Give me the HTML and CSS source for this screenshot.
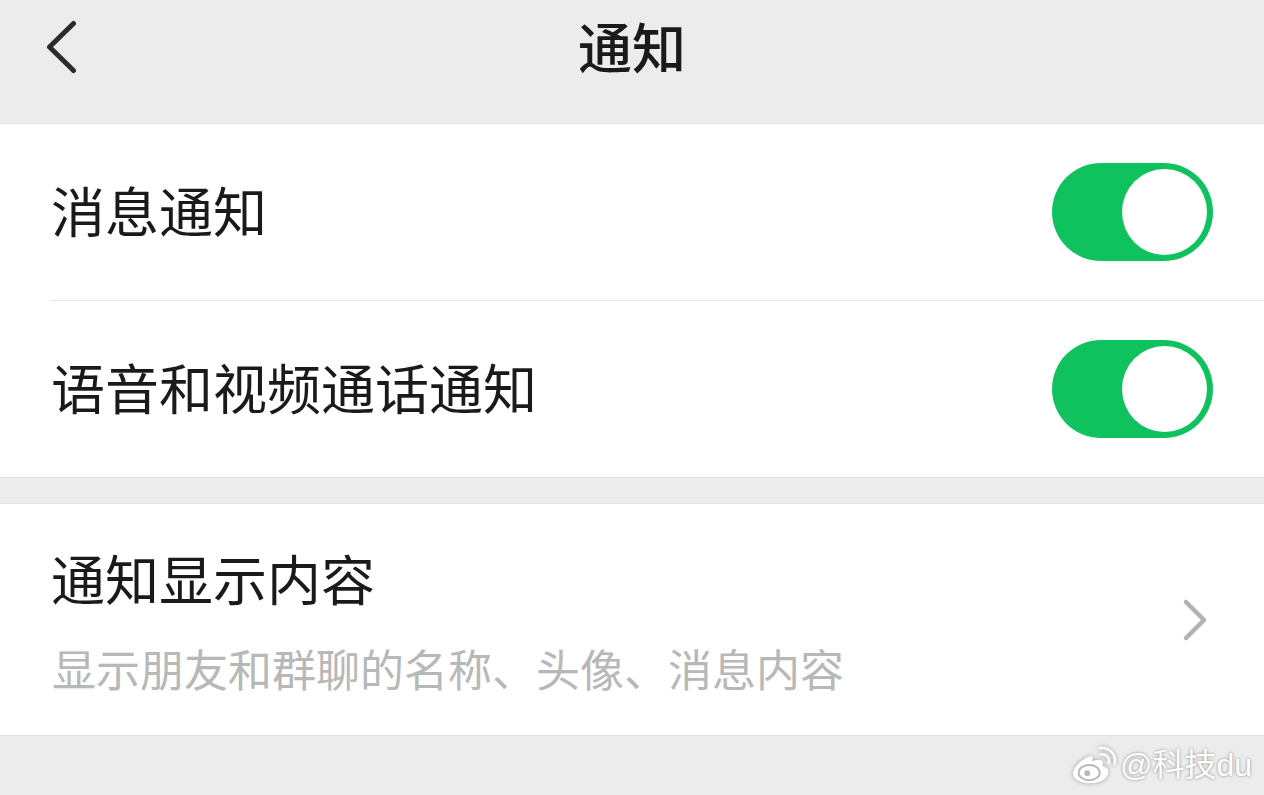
FILE: index.html
```html
<!DOCTYPE html>
<html lang="zh-CN">
<head>
    <meta charset="UTF-8">
    <meta name="viewport" content="width=device-width, initial-scale=1.0">
    <title>通知</title>
    <link rel="stylesheet" href="styles.css">
</head>
<body>
    <header class="top-bar">
        <svg class="back-icon" width="32" height="56" viewBox="0 0 32 56">
            <path d="M27.500 3.500 L3.500 27 L27.500 50.500" fill="none" stroke="#2b2b2b" stroke-width="5" stroke-linecap="round" stroke-linejoin="round"/>
        </svg>
        <h1 class="title">通知</h1>
    </header>

    <section class="group">
        <div class="row row-switch row-first">
            <span class="label">消息通知</span>
            <span class="switch"><span class="knob"></span></span>
        </div>
        <div class="row row-switch row-second">
            <span class="label">语音和视频通话通知</span>
            <span class="switch"><span class="knob"></span></span>
        </div>
    </section>

    <section class="group group-last">
        <div class="row row-link">
            <div class="link-text">
                <span class="label">通知显示内容</span>
                <span class="hint">显示朋友和群聊的名称、头像、消息内容</span>
            </div>
            <svg class="chevron" width="26" height="44" viewBox="0 0 26 44">
                <path d="M4 4 L22 22 L4 40" fill="none" stroke="#b2b2b2" stroke-width="4.500" stroke-linecap="round" stroke-linejoin="round"/>
            </svg>
        </div>
    </section>

    <div class="watermark">
        <svg class="weibo-icon" width="46" height="40" viewBox="0 0 48 40">
            <path d="M20 11 C11 14 2 22 2 29 C2 35 11 39 21 39 C32 39 39 33 39 27 C39 23 35 22 33 21 C34 17 33 15 30 14.500 C27 14 24 15.500 22 16 C23 12 23 10 20 11 Z" fill="#fff"/>
            <ellipse cx="19" cy="28" rx="11" ry="8" fill="none" stroke="#b9b9b9" stroke-width="2"/>
            <circle cx="17" cy="28.500" r="3" fill="#b9b9b9"/>
            <path d="M31 9 C36 8 41 12 39.500 18" fill="none" stroke="#fff" stroke-width="2.500" stroke-linecap="round"/>
            <path d="M30 2.500 C39 0.500 48 9 45.500 19" fill="none" stroke="#fff" stroke-width="2.500" stroke-linecap="round"/>
        </svg>
        <span>@科技du</span>
    </div>
</body>
</html>
```

FILE: styles.css
```css
html, body { margin: 0; padding: 0; }
body { height: 795px; overflow: hidden; position: relative; background-color: #ececec; font-family: "Noto Sans CJK SC", "Liberation Sans", sans-serif; color: #1a1a1a; }

.top-bar { height: 123px; display: flex; justify-content: center; position: relative; }
.back-icon { position: absolute; left: 46px; top: 20px; }
.title { margin: 0; font-size: 54px; line-height: 92px; font-weight: 500; }

.group { background-color: #fff; border-top: 1px solid #e2e2e2; border-bottom: 1px solid #e2e2e2; margin-bottom: 25px; }
.group-last { margin-bottom: 0; }

.row { display: flex; align-items: center; justify-content: space-between; padding: 0 51px 0 51px; }
.row-first { height: 177px; padding-bottom: 1px; box-sizing: border-box; }
.row-second { height: 176px; position: relative; }
.row-second::before { content: ""; position: absolute; left: 51px; right: 0; top: -1px; height: 1px; background-color: #e6e6e6; }
.row-link { height: 231px; padding-right: 56px; }

.label { font-size: 54px; line-height: 76px; font-weight: 400; display: block; }
.row-switch .label { position: relative; top: -2px; }
.link-text { display: flex; flex-direction: column; gap: 21px; padding-bottom: 1px; }
.hint { font-size: 44px; line-height: 62px; color: #b8b8b8; margin-left: 1px; }

.switch { width: 161px; height: 98px; box-sizing: border-box; border-radius: 49px; background-color: #10c25e; display: flex; justify-content: flex-end; align-items: center; padding-right: 6px; flex-shrink: 0; }
.knob { width: 85px; height: 86px; border-radius: 50%; background-color: #fff; }

.chevron { flex-shrink: 0; }

.watermark { position: absolute; right: 12px; top: 745px; display: flex; align-items: center; gap: 3px; color: #fff; font-size: 32px; line-height: 40px; text-shadow: 0 0 3px rgba(0,0,0,0.45); font-family: "Liberation Sans", "Noto Sans CJK SC", sans-serif; }
.weibo-icon { filter: drop-shadow(0 0 2px rgba(0,0,0,0.35)); }
```
